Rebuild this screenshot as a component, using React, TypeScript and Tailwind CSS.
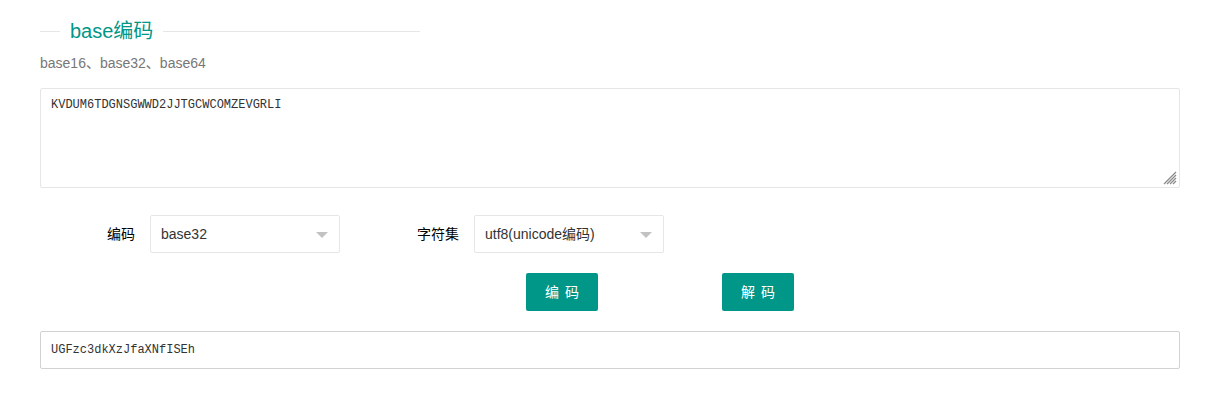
import { useState } from "react";

const SANS = "font-['Liberation_Sans','Noto_Sans_CJK_SC',sans-serif]";
const MONO = "font-['Liberation_Mono','Noto_Sans_CJK_SC',monospace]";

function FakeSelect({ value }: { value: string }) {
  return (
    <div className="relative w-[190px] h-[38px] border border-[#e6e6e6] rounded-[2px] bg-white flex items-center pl-[10px] text-[14px] text-[#333]">
      <span>{value}</span>
      <span className="absolute right-[11px] top-[16px] w-0 h-0 border-x-[6px] border-x-transparent border-t-[6px] border-t-[#c2c2c2]" />
    </div>
  );
}

export default function App() {
  const [input, setInput] = useState("KVDUM6TDGNSGWWD2JJTGCWCOMZEVGRLI");
  const [output, setOutput] = useState("UGFzc3dkXzJfaXNfISEh");

  return (
    <div className={`min-h-screen bg-white pl-[40px] pr-[38px] pt-[20px] ${SANS}`}>
      <div className="w-[380px] h-[22px] flex items-center">
        <div className="w-[20px] h-px bg-[#e6e6e6]" />
        <span className="px-[10px] text-[20px] leading-[22px] text-[#009688]">base编码</span>
        <div className="flex-1 h-px bg-[#e6e6e6]" />
      </div>
      <p className="mt-[11px] text-[14px] leading-[20px] text-[#777]">base16、base32、base64</p>

      <div className="relative mt-[15px]">
        <textarea
          value={input}
          onChange={e => setInput(e.target.value)}
          className={`block w-full h-[100px] resize-none border border-[#e6e6e6] rounded-[2px] px-[10px] py-[6px] text-[12px] leading-[20px] text-[#333] outline-none ${MONO}`}
        />
        {/* resize grip */}
        <svg className="absolute right-[3px] bottom-[3px]" width="14" height="14" viewBox="0 0 14 14">
          <g stroke="#8a8a8a" strokeWidth="1.2">
            <line x1="13" y1="1" x2="1" y2="13" />
            <line x1="13" y1="4" x2="4" y2="13" />
            <line x1="13" y1="7" x2="7" y2="13" />
            <line x1="13" y1="10" x2="10" y2="13" />
          </g>
        </svg>
      </div>

      <div className="mt-[27px] flex items-center">
        <label className="w-[110px] pr-[15px] text-right text-[14px] text-black">编码</label>
        <FakeSelect value="base32" />
        <label className="ml-[24px] w-[110px] pr-[15px] text-right text-[14px] text-black">字符集</label>
        <FakeSelect value="utf8(unicode编码)" />
      </div>

      <div className="mt-[20px] flex gap-[124px] pl-[486px]">
        <button className="w-[72px] h-[38px] bg-[#009688] text-white text-[14px] rounded-[2px] tracking-[6px] pl-[6px]">编码</button>
        <button className="w-[72px] h-[38px] bg-[#009688] text-white text-[14px] rounded-[2px] tracking-[6px] pl-[6px]">解码</button>
      </div>

      <input
        value={output}
        onChange={e => setOutput(e.target.value)}
        className={`mt-[20px] block w-full h-[38px] border border-[#d2d2d2] rounded-[2px] px-[10px] text-[12px] text-[#333] outline-none ${MONO}`}
      />
    </div>
  );
}
